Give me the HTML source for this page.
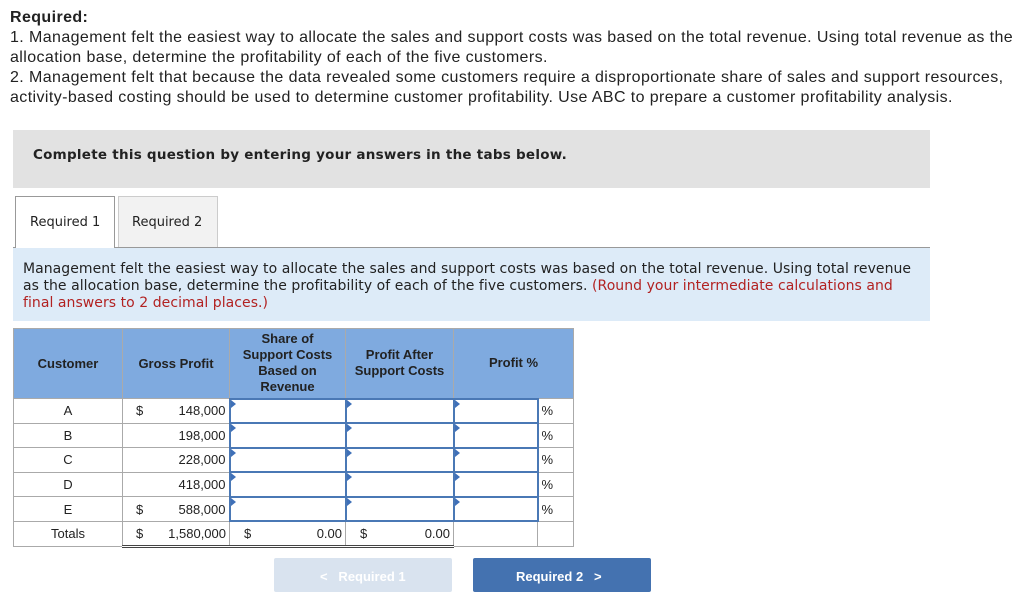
<!DOCTYPE html>
<html><head><meta charset="utf-8"><style>
*{margin:0;padding:0;box-sizing:border-box}
body{width:1024px;height:614px;background:#fff;position:relative;overflow:hidden;font-family:"Liberation Sans",sans-serif;color:#222}
.a{position:absolute;white-space:nowrap}
.q{font-size:16px;line-height:20px;left:10px;letter-spacing:0.4px}
.v{font-family:"DejaVu Sans",sans-serif}
table{position:absolute;left:13px;top:328px;border-collapse:collapse;font-size:13px}
td,th{border:1px solid #aaa;padding:0}
th{background:#7faadf;font-weight:bold;color:#222;line-height:16px;height:70px}
td{height:24.6px;text-align:center}
.in{border:2px solid #4a78b5;position:relative}
.in:before{content:"";position:absolute;left:0;top:0;border-left:5px solid #3f70b8;border-top:4px solid transparent;border-bottom:4px solid transparent}
.r{text-align:right;padding-right:3px}
</style></head><body>
<div class="a q" style="top:8px;font-weight:bold">Required:</div>
<div class="a q" style="top:28px">1. Management felt the easiest way to allocate the sales and support costs was based on the total revenue. Using total revenue as the</div>
<div class="a q" style="top:48px">allocation base, determine the profitability of each of the five customers.</div>
<div class="a q" style="top:68px">2. Management felt that because the data revealed some customers require a disproportionate share of sales and support resources,</div>
<div class="a q" style="top:88px">activity-based costing should be used to determine customer profitability. Use ABC to prepare a customer profitability analysis.</div>
<div class="a" style="left:13px;top:130px;width:917px;height:58px;background:#e2e2e2"></div>
<div class="a v" style="left:33px;top:147px;font-size:13.5px;font-weight:bold;letter-spacing:0.25px">Complete this question by entering your answers in the tabs below.</div>
<div class="a" style="left:13px;top:247px;width:917px;height:1px;background:#999"></div>
<div class="a" style="left:15px;top:196px;width:100px;height:52px;border:1px solid #999;border-bottom:none;background:#fff"></div>
<div class="a" style="left:118px;top:196px;width:100px;height:51px;border:1px solid #ccc;border-bottom:none;background:#f2f2f2"></div>
<div class="a v" style="left:30px;top:215px;font-size:13px">Required 1</div>
<div class="a v" style="left:132px;top:215px;font-size:13px">Required 2</div>
<div class="a" style="left:13px;top:248px;width:917px;height:73px;background:#ddebf8"></div>
<div class="a v" style="left:23px;top:261px;font-size:14px;line-height:17px;letter-spacing:0.05px">Management felt the easiest way to allocate the sales and support costs was based on the total revenue. Using total revenue<br>as the allocation base, determine the profitability of each of the five customers. <span style="color:#b22222">(Round your intermediate calculations and</span><br><span style="color:#b22222">final answers to 2 decimal places.)</span></div>
<table>
<tr><th style="width:109px">Customer</th><th style="width:107px">Gross Profit</th><th style="width:116px">Share of<br>Support Costs<br>Based on<br>Revenue</th><th style="width:108px">Profit After<br>Support Costs</th><th colspan="2" style="width:120px">Profit %</th></tr>
<tr><td>A</td><td class="r"><span style="float:left;padding-left:13px">$</span>148,000</td><td class="in"></td><td class="in"></td><td class="in" style="width:84px"></td><td style="text-align:left;padding-left:3px">%</td></tr>
<tr><td>B</td><td class="r">198,000</td><td class="in"></td><td class="in"></td><td class="in"></td><td style="text-align:left;padding-left:3px">%</td></tr>
<tr><td>C</td><td class="r">228,000</td><td class="in"></td><td class="in"></td><td class="in"></td><td style="text-align:left;padding-left:3px">%</td></tr>
<tr><td>D</td><td class="r">418,000</td><td class="in"></td><td class="in"></td><td class="in"></td><td style="text-align:left;padding-left:3px">%</td></tr>
<tr><td>E</td><td class="r"><span style="float:left;padding-left:13px">$</span>588,000</td><td class="in"></td><td class="in"></td><td class="in"></td><td style="text-align:left;padding-left:3px">%</td></tr>
<tr><td>Totals</td><td class="r" style="border-bottom:3px double #444"><span style="float:left;padding-left:13px">$</span>1,580,000</td><td class="r" style="border-bottom:3px double #444"><span style="float:left;padding-left:14px">$</span>0.00</td><td class="r" style="border-bottom:3px double #444"><span style="float:left;padding-left:14px">$</span>0.00</td><td></td><td></td></tr>
</table>
<div class="a" style="left:274px;top:558px;width:178px;height:34px;background:#d9e3ef;border-radius:2px"></div>
<div class="a" style="left:320px;top:569px;font-size:13px;font-weight:bold;color:#fff">&lt;&nbsp;&nbsp;&nbsp;Required 1</div>
<div class="a" style="left:473px;top:558px;width:178px;height:34px;background:#4472b0;border-radius:2px"></div>
<div class="a" style="left:516px;top:569px;font-size:13px;font-weight:bold;color:#fff">Required 2&nbsp;&nbsp;&nbsp;&gt;</div>
</body></html>
